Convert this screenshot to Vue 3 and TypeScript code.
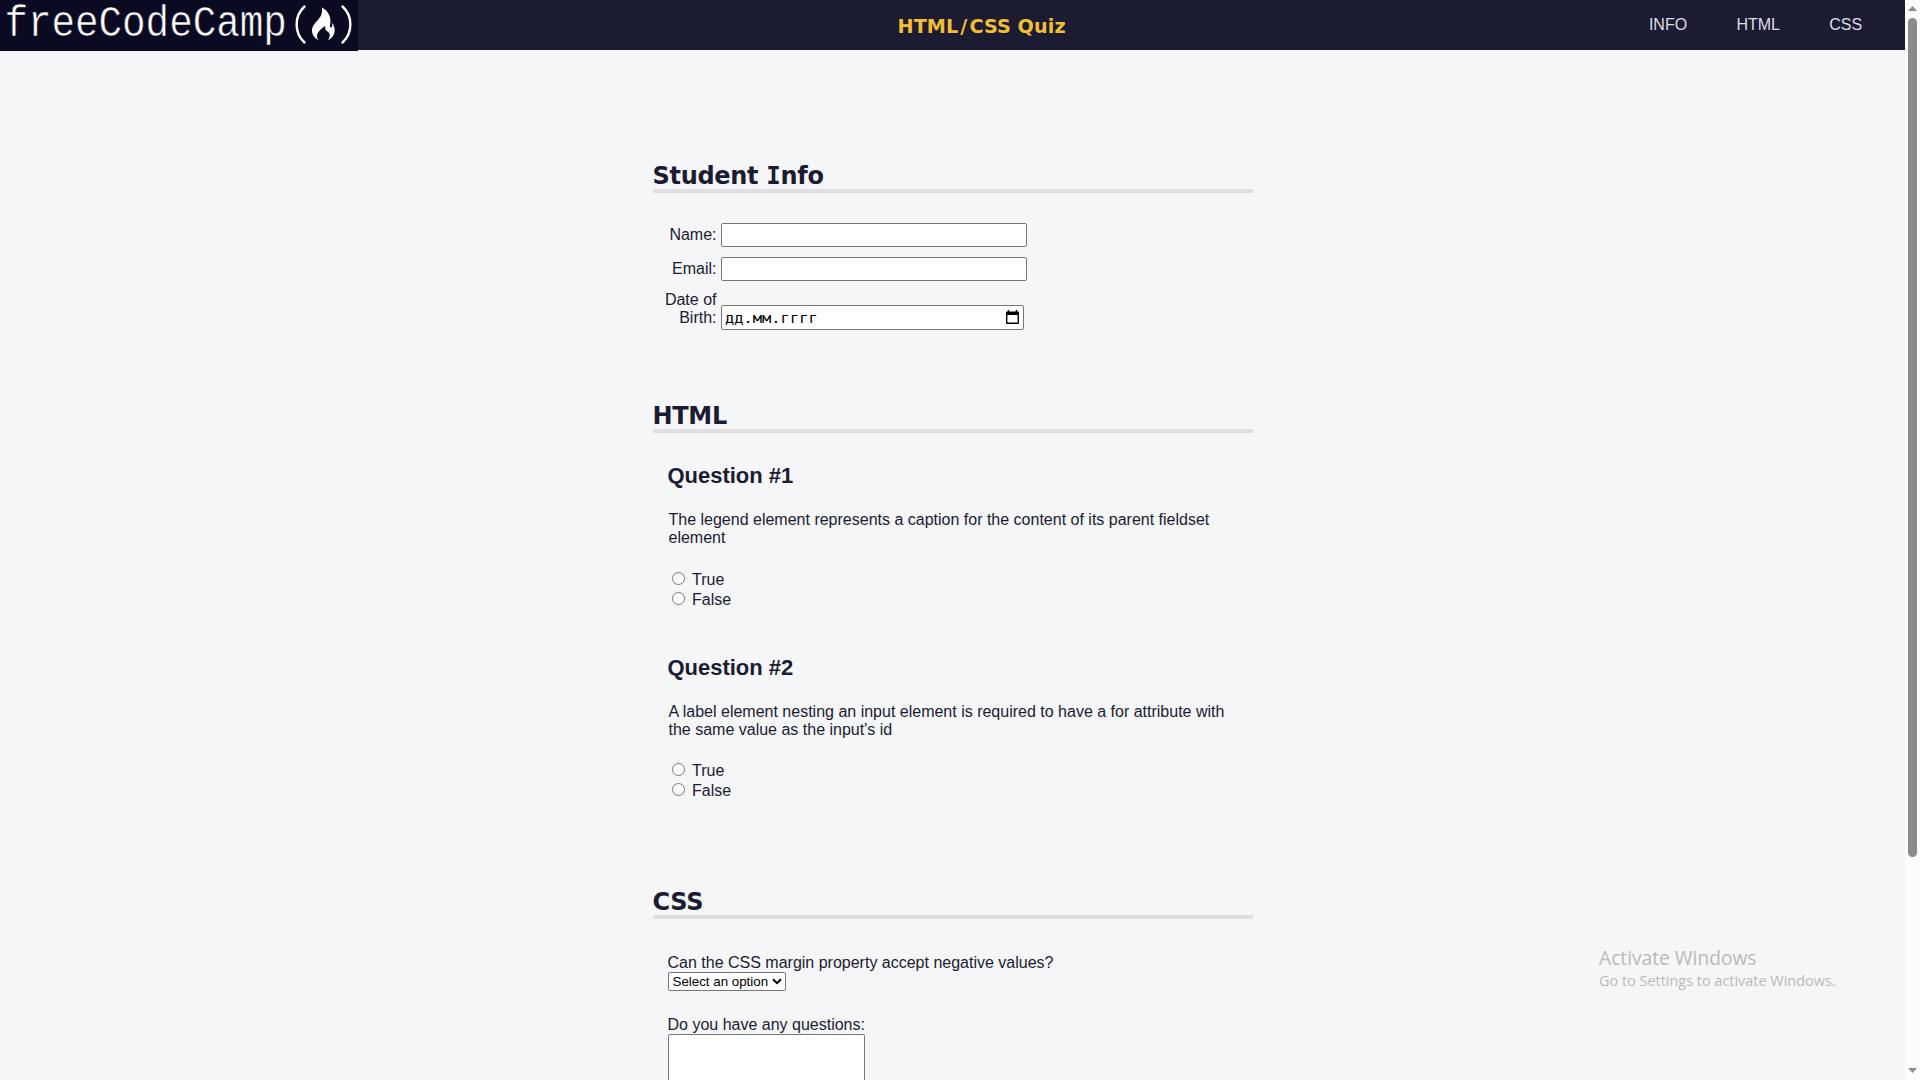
<script setup lang="ts">
interface Question {
  id: string
  title: string
  text: string
}

const links: string[] = ['INFO', 'HTML', 'CSS']

const questions: Question[] = [
  {
    id: 'q1',
    title: 'Question #1',
    text: 'The legend element represents a caption for the content of its parent fieldset element',
  },
  {
    id: 'q2',
    title: 'Question #2',
    text: "A label element nesting an input element is required to have a for attribute with the same value as the input's id",
  },
]

const answers: string[] = ['True', 'False']
</script>

<template>
  <div class="window">
    <div class="page">
      <header class="header">
        <svg class="logo" width="358" height="51" viewBox="0 0 358 51">
          <rect width="358" height="51" fill="#0a0a23" />
          <text class="logo-text" transform="translate(4.4 36) scale(1 1.13)" textLength="282.5">freeCodeCamp</text>
          <g fill="none" stroke="#fff" stroke-width="2.4" stroke-linecap="round">
            <path d="M304.500 6.500C294 16 294 33 304.500 42.500" />
            <path d="M342.500 6.500C353 16 353 33 342.500 42.500" />
          </g>
          <path
            fill="#fff"
            d="M321.700 7.300C328 11 331 16.500 330.400 22.300C330.200 25.500 329.300 27.300 331 27.400C332.800 27.400 332.500 24.500 331.300 22.300C334.500 25.500 335.400 29.500 334.300 33C333.300 36.500 331 39 327.800 40.200C330.300 37 330.700 33.500 327.500 31.500C326 30.500 324.500 29 325.300 26C321.500 28 317.500 32 317 35.500C316.700 37.500 317.500 39 319 40.200C314.500 38.500 311.500 34 312 29.500C312.700 24 318.500 20.500 321 15.500C322.300 12.700 322.400 9.500 321.700 7.300Z"
          />
        </svg>
        <h1 class="title">HTML<span class="slash">/</span>CSS Quiz</h1>
        <nav class="nav">
          <a v-for="link in links" :key="link" class="nav-link">{{ link }}</a>
        </nav>
      </header>

      <main class="main">
        <section class="info">
          <h2 class="heading">Student <span class="serif-i">I</span>nfo</h2>
          <div class="row">
            <label class="label" for="name">Name:</label>
            <input id="name" class="field" type="text" />
          </div>
          <div class="row">
            <label class="label" for="email">Email:</label>
            <input id="email" class="field" type="email" />
          </div>
          <div class="row row-date">
            <label class="label">Date of Birth:</label>
            <div class="field date">
              <span class="date-text">дд.мм.гггг</span>
              <svg width="13" height="15" viewBox="0 0 13 15">
                <path d="M2.500 0V3M10.500 0V3" stroke="#000" stroke-width="1.500" />
                <path d="M0 2.500Q0 1.500 1 1.500H12Q13 1.500 13 2.500V13Q13 14 12 14H1Q0 14 0 13ZM1.400 5V12.600H11.600V5Z" fill="#000" fill-rule="evenodd" />
              </svg>
            </div>
          </div>
        </section>

        <section class="html">
          <h2 class="heading">HTML</h2>
          <div v-for="q in questions" :key="q.id" class="question">
            <h3 class="question-title">{{ q.title }}</h3>
            <p class="text">{{ q.text }}</p>
            <label v-for="a in answers" :key="a" class="answer">
              <input class="radio" type="radio" :name="q.id" />{{ a }}
            </label>
          </div>
        </section>

        <section class="css">
          <h2 class="heading">CSS</h2>
          <div class="group">
            <label class="text">Can the CSS margin property accept negative values?</label>
            <div class="select">
              <span>Select an option</span>
              <svg width="10" height="7" viewBox="0 0 10 7">
                <path d="M1 1.200L5 5.200L9 1.200" fill="none" stroke="#000" stroke-width="2" />
              </svg>
            </div>
          </div>
          <div class="group">
            <label class="text" for="comments">Do you have any questions:</label>
            <textarea id="comments" class="comments"></textarea>
          </div>
        </section>
      </main>
    </div>

    <div class="scrollbar">
      <svg width="9" height="5" viewBox="0 0 9 5"><path d="M0 5L4.500 0L9 5Z" fill="#8b8b8b" /></svg>
      <div class="thumb"></div>
      <svg width="9" height="5" viewBox="0 0 9 5"><path d="M0 0L4.500 5L9 0Z" fill="#8b8b8b" /></svg>
    </div>

    <div class="watermark">
      <div class="watermark-title">Activate Windows</div>
      <div class="watermark-text">Go to Settings to activate Windows.</div>
    </div>
  </div>
</template>

<style>
body {
  margin: 0;
  background: #f5f6f7;
}
</style>

<style scoped>
* {
  box-sizing: border-box;
}

.window {
  position: relative;
  display: flex;
  width: 1920px;
  height: 1080px;
  overflow: hidden;
  background: #f5f6f7;
  color: #1b1b32;
  font-family: "Liberation Sans", Arial, sans-serif;
  font-size: 16px;
  line-height: 18px;
}

.page {
  width: 1905px;
}

.header {
  display: flex;
  height: 50px;
  background: #1b1b32;
}

.logo {
  flex: none;
  display: block;
}

.logo-text {
  font-family: "Liberation Mono", monospace;
  font-size: 39.300px;
  fill: #fff;
  stroke: #0a0a23;
  stroke-width: 0.500px;
}

.title {
  width: 200px;
  margin: 15px 0 0 539.500px;
  color: #f1be32;
  font-family: Verdana, "DejaVu Sans", sans-serif;
  font-size: 19.200px;
  line-height: 23px;
  letter-spacing: 0.080px;
  white-space: nowrap;
}

.slash {
  padding: 0 2px;
}

.nav {
  display: flex;
  flex: 1;
  justify-content: flex-end;
  gap: 49.300px;
  padding: 16px 42.800px 0 0;
  color: #dfdfe2;
}

.main {
  width: 600px;
  margin: 0 auto;
}

.heading {
  height: 35px;
  margin: 0;
  border-bottom: 4px solid #dfdfe2;
  font-family: Verdana, "DejaVu Sans", sans-serif;
  font-size: 24px;
  line-height: 36px;
  letter-spacing: -0.300px;
}

.serif-i {
  font-family: Verdana, "DejaVu Sans Mono", monospace;
}

.info {
  height: 240px;
  padding-top: 108px;
  box-sizing: content-box;
}

.info .heading {
  margin-bottom: 30px;
}

.row {
  display: flex;
  align-items: center;
  height: 24px;
  margin-bottom: 10px;
  padding-left: 9px;
}

.label {
  width: 55px;
  margin-right: 4.500px;
  text-align: right;
}

.field {
  width: 306px;
  height: 24px;
  margin: 0;
  padding: 1px 2px;
  border: 1px solid #767676;
  border-radius: 2px;
  background: #fff;
}

.row-date {
  align-items: flex-end;
  height: 39px;
}

.row-date .label {
  height: 39px;
}

.date {
  display: flex;
  align-items: center;
  justify-content: space-between;
  width: 303px;
  height: 25px;
  padding: 1px 4px 2px 3px;
  color: #000;
  font-family: "DejaVu Sans Mono", monospace;
  font-size: 13.333px;
}

.date-text {
  margin-top: 4px;
  transform: scaleX(1.155);
  transform-origin: 0 50%;
}

.html {
  height: 486px;
}

.question {
  height: 192px;
  padding: 30px 14px 0 15px;
}

.question-title {
  margin: 0 0 22px;
  font-size: 22px;
  line-height: 26px;
  letter-spacing: -0.030px;
}

.text {
  display: block;
  margin: 0;
}

.question .text {
  margin-bottom: 23px;
  padding-left: 1px;
}

.question + .question .text {
  margin-bottom: 22px;
}

.answer {
  display: flex;
  align-items: center;
  height: 20px;
}

.radio {
  width: 13px;
  height: 13px;
  margin: 0 7.500px 4px 4px;
}

.group {
  padding: 0 15px;
  margin-bottom: 25px;
}

.css .heading {
  margin-bottom: 35px;
}

.select {
  display: flex;
  align-items: center;
  justify-content: space-between;
  width: 118px;
  height: 19px;
  padding: 0 3px 0 4px;
  border: 1px solid #767676;
  border-radius: 2px;
  background: #fff;
  color: #000;
  font-size: 13.333px;
}

.comments {
  display: block;
  width: 197px;
  height: 100px;
  border: 1px solid #767676;
  border-radius: 2px;
  background: #fff;
  resize: none;
}

.scrollbar {
  display: flex;
  flex-direction: column;
  align-items: center;
  width: 15px;
  padding-top: 6px;
  background: #fcfcfc;
}

.thumb {
  width: 9px;
  height: 839px;
  margin: 7px 0 211px;
  border-radius: 5px;
  background: #8b8b8b;
}

.watermark {
  position: absolute;
  left: 1599px;
  top: 944px;
  color: #b9babb;
  font-family: "Segoe UI", "Open Sans", sans-serif;
  font-weight: 400;
  white-space: nowrap;
}

.watermark-title {
  font-size: 19.200px;
  line-height: 27px;
}

.watermark-text {
  margin-top: 1px;
  font-size: 14.450px;
  line-height: 18px;
}
</style>
